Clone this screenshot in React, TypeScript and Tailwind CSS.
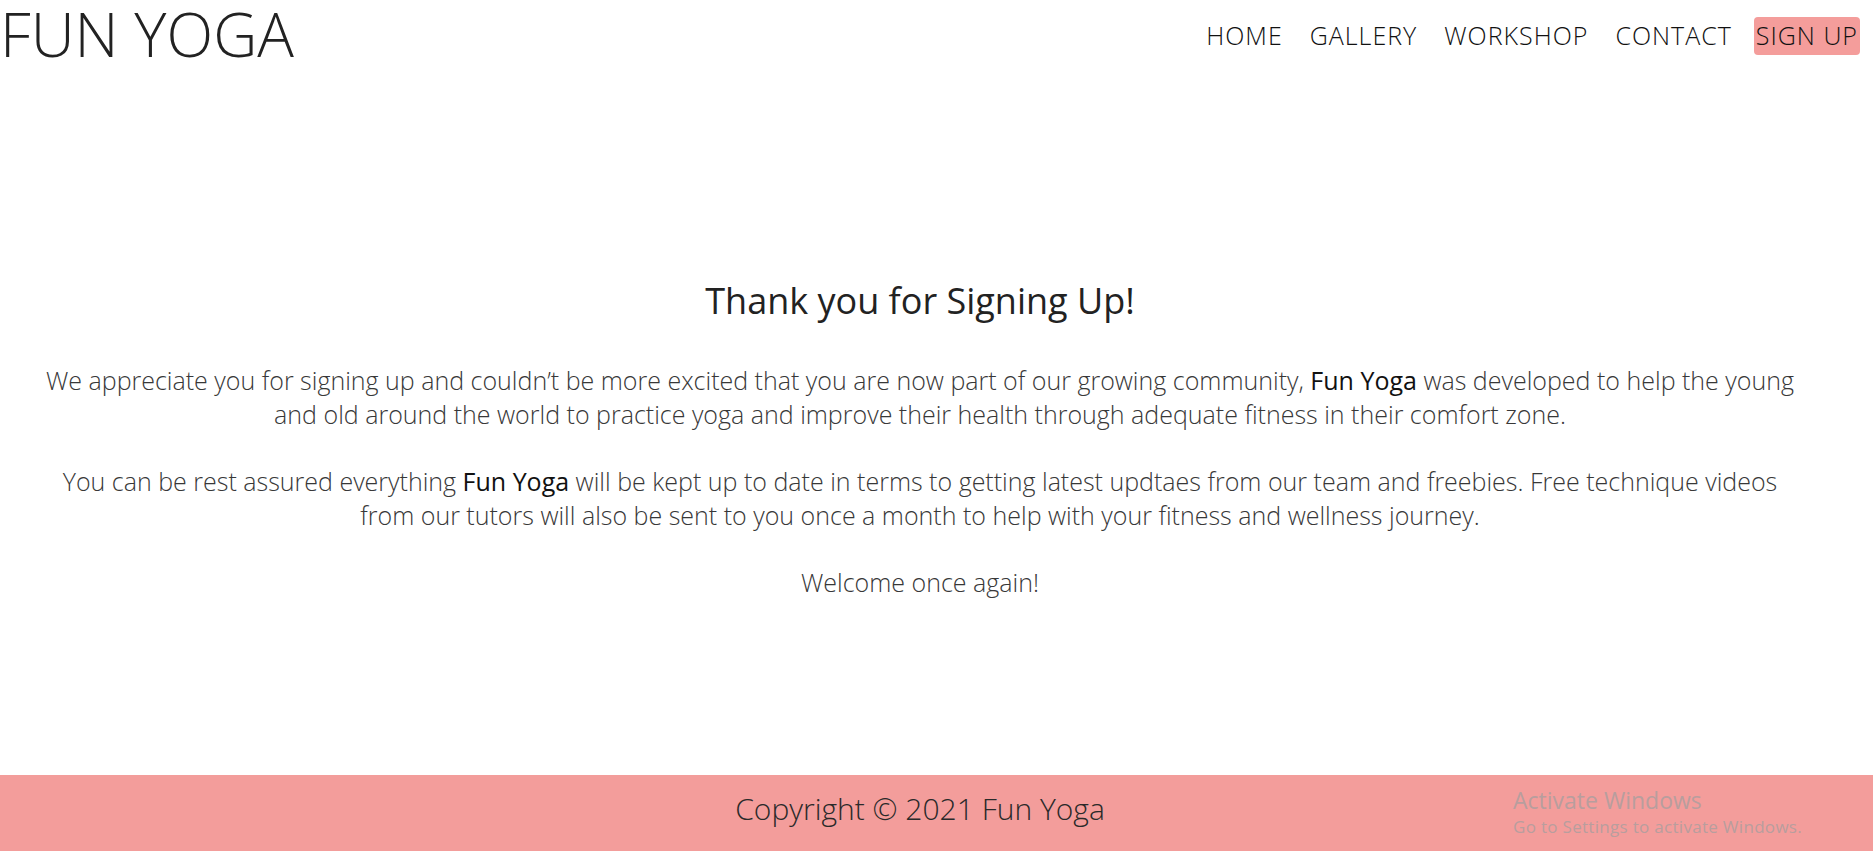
import React from "react";

const navLinks = ["HOME", "GALLERY", "WORKSHOP", "CONTACT"];

export default function App() {
  return (
    <div
      className="flex h-[851px] flex-col overflow-hidden bg-white text-[#222]"
      style={{ fontFamily: '"Open Sans", "Liberation Sans", sans-serif' }}
    >
      <header className="flex items-start justify-between pr-[13px]">
        <h1 className="mt-[3px] text-[61px] font-light leading-none text-[#222]">
          FUN YOGA
        </h1>
        <nav className="mt-[17px] flex items-center gap-[27px] text-[25px] font-light tracking-[1px]">
          {navLinks.map((link) => (
            <a key={link} href="#" className="text-[#111]">
              {link}
            </a>
          ))}
          <a
            href="#"
            className="-ml-[5px] rounded-[4px] bg-[#f49d9b] px-[2px] text-[#111]"
          >
            SIGN UP
          </a>
        </nav>
      </header>

      <main className="flex-1 pr-[33px] pt-[210px]">
        <div className="mx-auto max-w-[1750px] text-center">
          <h2 className="text-[36px] font-normal text-[#222]">
            Thank you for Signing Up!
          </h2>
          <div className="mt-[36px] flex flex-col gap-[34px] text-[25px] font-light leading-[33.5px] text-[#383838]">
            <p>
              We appreciate you for signing up and couldn’t be more excited
              that you are now part of our growing community,{" "}
              <span className="font-normal text-[#111]">Fun Yoga</span> was
              developed to help the young and old around the world to practice
              yoga and improve their health through adequate fitness in their
              comfort zone.
            </p>
            <p>
              You can be rest assured everything{" "}
              <span className="font-normal text-[#111]">Fun Yoga</span> will be
              kept up to date in terms to getting latest updtaes from our team
              and freebies. Free technique videos from our tutors will also be
              sent to you once a month to help with your fitness and wellness
              journey.
            </p>
            <p>Welcome once again!</p>
          </div>
        </div>
      </main>

      <footer className="relative flex h-[76px] shrink-0 items-center justify-center bg-[#f39d9b] pb-[10px] pr-[33px]">
        <p className="text-[30px] font-light text-[#2a2a2a]">
          Copyright © 2021 Fun Yoga
        </p>
        <div className="absolute left-[1513px] top-[9px] font-normal text-[#b89e9e]">
          <p className="text-[23px] leading-[32px]">Activate Windows</p>
          <p className="text-[17px] leading-[22px] tracking-[0.3px]">
            Go to Settings to activate Windows.
          </p>
        </div>
      </footer>
    </div>
  );
}
